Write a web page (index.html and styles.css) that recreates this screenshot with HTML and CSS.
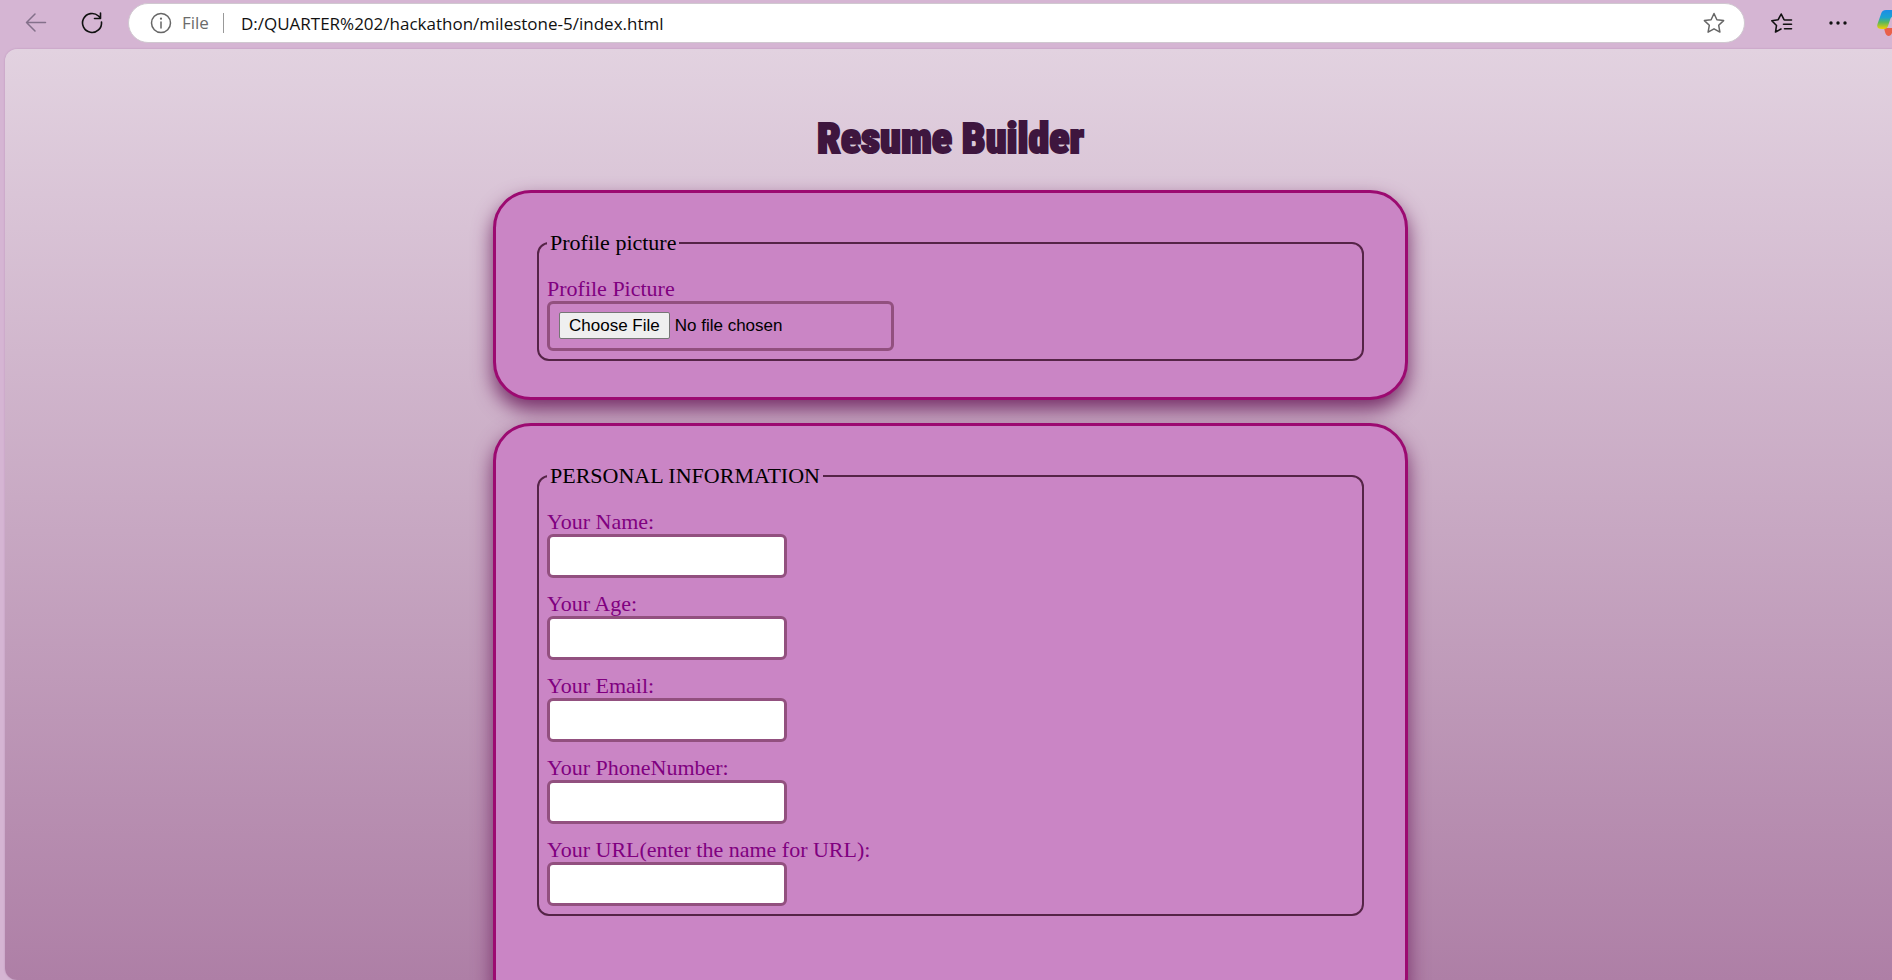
FILE: index.html
```html
<!DOCTYPE html>
<html lang="en">
<head>
<meta charset="utf-8">
<title>Resume Builder</title>
<link rel="stylesheet" href="styles.css">
</head>
<body>
<header class="toolbar">
  <button class="tool back" aria-label="Back"><svg width="24" height="24" viewBox="0 0 24 24"><path d="M21.500 11.500H2.500M11 3L2.500 11.500l8.500 8.500"/></svg></button>
  <button class="tool reload" aria-label="Reload"><svg width="24" height="24" viewBox="0 0 24 24"><path d="M21.500 11A9.500 9.500 0 1 1 18.500 5L20.500 7M20.500 2v5.500h-6"/></svg></button>
  <div class="address">
    <svg class="info" width="22" height="22" viewBox="0 0 22 22"><circle cx="11" cy="11" r="9.500"/><path d="M11 10v6"/><circle class="dot" cx="11" cy="6.700" r="1.100"/></svg>
    <span class="scheme">File</span>
    <input class="url" type="text" aria-label="Address" value="D:/QUARTER%202/hackathon/milestone-5/index.html">
    <button class="tool star" aria-label="Add to favorites"><svg width="22" height="22" viewBox="0 0 22 22"><path d="M11 1.500l2.900 6.200 6.700.9-4.900 4.700 1.200 6.800-5.900-3.300-5.900 3.300 1.200-6.800L1.400 8.600l6.700-.9z"/></svg></button>
  </div>
  <button class="tool favs" aria-label="Favorites"><svg width="24" height="24" viewBox="0 0 24 24"><path d="M12 18L6.500 21l1-6.500L2.800 9.700l6.400-1L12.200 3l2.800 5.700M15.500 9H22.500M14.500 13.300H22.500M15.500 17.700H22.500"/></svg></button>
  <button class="tool more" aria-label="More"><svg width="24" height="24" viewBox="0 0 24 24"><circle cx="5" cy="12" r="1.700"/><circle cx="12" cy="12" r="1.700"/><circle cx="19" cy="12" r="1.700"/></svg></button>
  <button class="tool copilot" aria-label="Copilot"><svg width="30" height="30" viewBox="0 0 30 30"><defs><linearGradient id="sky" x1="0" y1="0" x2="0" y2="1"><stop offset="0" stop-color="#1b8ce8"/><stop offset=".4" stop-color="#1ba3cf"/><stop offset=".65" stop-color="#5cb85a"/><stop offset="1" stop-color="#f3d000"/></linearGradient></defs><path d="M7 20h11l-3 5q-1 3-3 3-3 0-4-4z" fill="#e9604a"/><path d="M9 2h15l-6 6q-4 0-5 4l-2 6q-1 3-4 3H5q-6 0-4.500-5L4 6q1-4 5-4z" fill="url(#sky)"/></svg></button>
</header>
<main class="page">
  <h1 class="title">Resume Builder</h1>
  <form class="form">
    <section class="card">
      <fieldset class="group">
        <legend>Profile picture</legend>
        <div class="field"><label for="pic">Profile Picture</label><input id="pic" class="file" type="file"></div>
      </fieldset>
    </section>
    <section class="card card-long">
      <fieldset class="group">
        <legend>PERSONAL INFORMATION</legend>
        <div class="field"><label for="name">Your Name:</label><input id="name" class="text" type="text"></div>
        <div class="field"><label for="age">Your Age:</label><input id="age" class="text" type="text"></div>
        <div class="field"><label for="email">Your Email:</label><input id="email" class="text" type="email"></div>
        <div class="field"><label for="phone">Your PhoneNumber:</label><input id="phone" class="text" type="tel"></div>
        <div class="field"><label for="link">Your URL(enter the name for URL):</label><input id="link" class="text" type="text"></div>
      </fieldset>
    </section>
  </form>
</main>
</body>
</html>
```
FILE: styles.css
```css
* { box-sizing: border-box; }
body {
  margin: 0;
  height: 100vh;
  display: flex;
  flex-direction: column;
  overflow: hidden;
  background: #d5b5d3;
  font-family: Georgia, "Liberation Serif", serif;
}
.toolbar {
  flex: none;
  display: flex;
  align-items: center;
  height: 49px;
  padding: 0 0 3px 24px;
}
.tool {
  flex: none;
  display: flex;
  padding: 0;
  border: 0;
  background: none;
}
.tool svg, .info { fill: none; stroke: #111; stroke-width: 1.6; stroke-linecap: round; stroke-linejoin: round; overflow: visible; }
.back svg { stroke: #83708a; stroke-width: 1.5; }
.reload { margin-left: 32px; }
.address {
  flex: 1;
  display: flex;
  align-items: center;
  height: 40px;
  margin-left: 24px;
  padding: 0 19px 0 21px;
  border: 1px solid #d0c8d0;
  border-radius: 20px;
  background: #fff;
  font: 17px "Open Sans", sans-serif;
}
.info { stroke: #666; stroke-width: 1.5; }
.info .dot { fill: #666; stroke: none; }
.scheme { margin-left: 10px; padding-right: 14px; border-right: 1px solid #999; line-height: 20px; color: #6b6b6b; }
.url { flex: 1; margin-left: 17px; padding: 0; border: 0; font: inherit; color: #111; }
.star svg { stroke: #666; stroke-width: 1.5; }
.favs { margin-left: 24px; }
.more { margin-left: 33px; }
.more circle { fill: #111; stroke: none; }
.copilot { width: 15px; margin-left: 27px; }
.copilot svg { stroke: none; }
.page {
  flex: 1;
  min-height: 0;
  overflow: hidden;
  margin-left: 5px;
  padding: 62px 0 0 4px;
  border-radius: 12px 0 0 12px;
  background: linear-gradient(#e2d2e0, #ae7fa6);
  box-shadow: 0 0 2px #b890b8;
}
.title {
  margin: 0;
  text-align: center;
  font: 900 42px/56px Impact, "Roboto Condensed", Roboto, sans-serif;
  color: #3e163e;
  -webkit-text-stroke: 2px #3e163e;
}
.form {
  display: flex;
  flex-direction: column;
  gap: 23px;
  width: 100%;
  max-width: 915px;
  margin: 23px auto 0;
}
.card {
  padding: 38px 41px 36px;
  border: 3px solid #9c0a71;
  border-radius: 38px;
  background: #ca85c5;
  box-shadow: 0 10px 20px #772f69;
}
.card-long { padding-bottom: 96px; }
.group {
  margin: 0;
  padding: 8px;
  border: 2px solid #552447;
  border-radius: 12px;
  font-size: 22px;
  line-height: 24px;
}
.group legend { padding: 0 3px; }
.field { display: flex; flex-direction: column; align-items: flex-start; margin-top: 14px; }
.field label { color: #800080; }
.text, .file { border: 3px solid #92507f; border-radius: 6px; }
.text { width: 240px; height: 44px; padding: 8px; background: #fff; font: 17px "Liberation Sans", sans-serif; }
.file { width: 347px; height: 50px; padding: 8px 9px; font: 17px "Liberation Sans", sans-serif; color: #000; }
.file::file-selector-button {
  height: 27px;
  margin: 0 5px 0 0;
  padding: 0 9px;
  border: 1px solid #767676;
  border-radius: 2px;
  background: #efefef;
  font: inherit;
  color: #000;
}
```
